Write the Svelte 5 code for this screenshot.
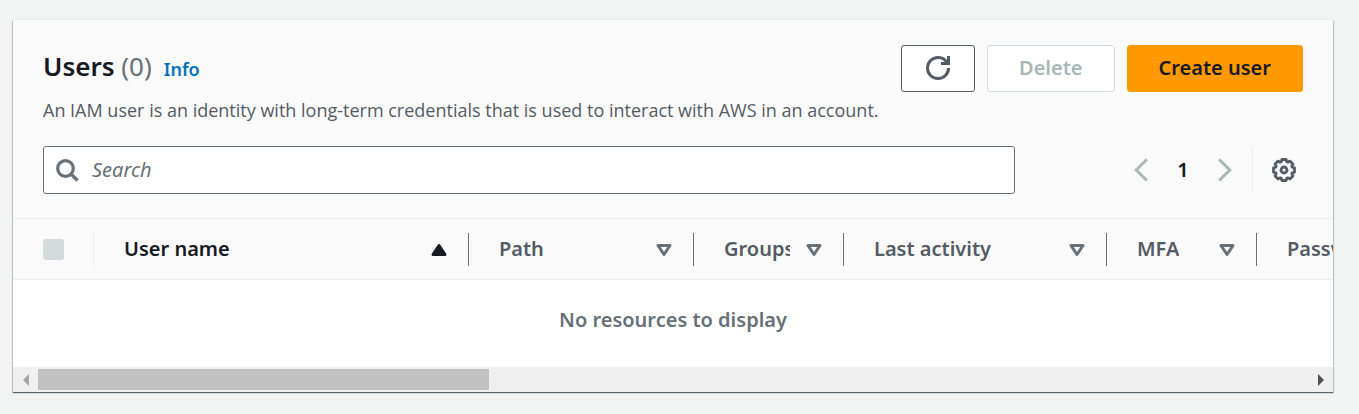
<script>
  let query = $state('');

  const columns = [
    { name: 'User name', width: 375, sorted: true },
    { name: 'Path', width: 225 },
    { name: 'Groups', width: 150 },
    { name: 'Last activity', width: 263 },
    { name: 'MFA', width: 150 },
    { name: 'Password age', width: 263 }
  ];
</script>

<main>
  <section class="card" aria-labelledby="title">
    <header>
      <div class="top">
        <div class="heading">
          <div class="title-row">
            <h1 id="title">Users <span class="count">(0)</span></h1>
            <a href="#info">Info</a>
          </div>
          <p>An IAM user is an identity with long-term credentials that is used to interact with AWS in an account.</p>
        </div>
        <div class="actions">
          <button class="btn refresh" type="button" aria-label="Refresh">
            <svg width="24" height="24" viewBox="0 0 16 16" fill="none" stroke="currentColor" stroke-width="2" aria-hidden="true">
              <path d="M10 5h5V0" />
              <path d="M15 8a6.957 6.957 0 0 1-7 7 6.957 6.957 0 0 1-7-7 6.957 6.957 0 0 1 7-7 6.87 6.87 0 0 1 6.3 4" />
            </svg>
          </button>
          <button class="btn" type="button" disabled>Delete</button>
          <button class="btn primary" type="button">Create user</button>
        </div>
      </div>
      <div class="tools">
        <label class="search">
          <svg width="24" height="24" viewBox="0 0 24 24" fill="none" stroke="currentColor" stroke-width="3.2" aria-hidden="true">
            <circle cx="10.5" cy="10.5" r="7.8" />
            <path d="M16 16l6.5 6.5" />
          </svg>
          <input type="text" placeholder="Search" aria-label="Search" bind:value={query} />
        </label>
        <div class="controls">
          <nav aria-label="Pagination">
            <button class="icon" type="button" disabled aria-label="Previous page">
              <svg width="14" height="24" viewBox="0 0 14 24" fill="none" stroke="currentColor" stroke-width="3" aria-hidden="true"><path d="M12.8 1.5L2.2 12l10.6 10.5" /></svg>
            </button>
            <button class="icon page" type="button" aria-current="page">1</button>
            <button class="icon" type="button" disabled aria-label="Next page">
              <svg width="14" height="24" viewBox="0 0 14 24" fill="none" stroke="currentColor" stroke-width="3" aria-hidden="true"><path d="M1.2 1.5L11.8 12 1.2 22.5" /></svg>
            </button>
          </nav>
          <button class="icon settings" type="button" aria-label="Preferences">
            <svg width="26" height="26" viewBox="0 0 26 26" fill="none" stroke="currentColor" stroke-width="2.8" stroke-linejoin="round" aria-hidden="true">
              <path d="M10.9 2.5h4.2l.7 2.3 1 .4 2.1-1.1 3 3-1.1 2.1.4 1 2.3.7v4.2l-2.3.7-.4 1 1.1 2.1-3 3-2.1-1.1-1 .4-.7 2.3h-4.2l-.7-2.3-1-.4-2.1 1.1-3-3 1.1-2.1-.4-1-2.3-.7v-4.2l2.3-.7.4-1-1.1-2.1 3-3 2.1 1.1 1-.4z" />
              <circle cx="13" cy="13" r="3" />
            </svg>
          </button>
        </div>
      </div>
    </header>

    <div class="scroller">
      <table>
        <colgroup>
          <col style="width: 81px" />
          {#each columns as column}
            <col style="width: {column.width}px" />
          {/each}
        </colgroup>
        <thead>
          <tr>
            <th class="select" scope="col">
              <div class="cell"><input type="checkbox" disabled aria-label="Select all users" /></div>
            </th>
            {#each columns as column}
              <th scope="col" class:sorted={column.sorted} aria-sort={column.sorted ? 'ascending' : 'none'}>
                <div class="cell">
                  <span class="name">{column.name}</span>
                  <svg width="24" height="24" viewBox="0 0 16 16" stroke="currentColor" stroke-width="2" stroke-linejoin="round" aria-hidden="true">
                    {#if column.sorted}
                      <path d="M4 11h8L8 5z" fill="currentColor" />
                    {:else}
                      <path d="M4 5h8l-4 6z" fill="none" />
                    {/if}
                  </svg>
                </div>
              </th>
            {/each}
          </tr>
        </thead>
      </table>
    </div>
    <div class="empty" role="status">No resources to display</div>

    <div class="scrollbar">
      <button type="button" disabled aria-label="Scroll left">
        <svg width="6" height="12" viewBox="0 0 6 12" aria-hidden="true"><path d="M6 0v12L0 6z" fill="#a3a3a3" /></svg>
      </button>
      <div class="track"><div class="thumb"></div></div>
      <button type="button" aria-label="Scroll right">
        <svg width="6" height="12" viewBox="0 0 6 12" aria-hidden="true"><path d="M0 0v12l6-6z" fill="#505050" /></svg>
      </button>
    </div>
  </section>
</main>

<style>
  :global(body) {
    margin: 0;
    background: #f2f3f3;
  }

  main {
    padding: 20px 26px 22px 13px;
    font-family: 'Noto Sans', 'Open Sans', sans-serif;
    font-size: 20px;
    line-height: 30px;
    color: #16191f;
  }

  * {
    box-sizing: border-box;
  }

  svg {
    display: block;
    flex: none;
  }

  button,
  input {
    font: inherit;
    color: inherit;
    margin: 0;
  }

  .card {
    background: #fff;
    box-shadow:
      0 1px 1px 0 rgba(0, 28, 36, 0.5),
      1px 1px 1px 0 rgba(0, 28, 36, 0.15),
      -1px 1px 1px 0 rgba(0, 28, 36, 0.15),
      0 -1px 0 0 #eaeded;
  }

  header {
    display: flex;
    flex-direction: column;
    gap: 22px;
    padding: 25px 30px 24px;
    background: #fafafa;
    border-bottom: 1px solid #eaeded;
  }

  .top {
    display: flex;
    justify-content: space-between;
    gap: 12px;
  }

  .title-row {
    display: flex;
    align-items: baseline;
    gap: 12px;
    height: 51px;
  }

  h1 {
    margin: 0;
    font-size: 26px;
    line-height: 42px;
    font-weight: 600;
  }

  .count {
    font-weight: 400;
    color: #687078;
  }

  a {
    font-size: 18px;
    line-height: 24px;
    font-weight: 600;
    color: #0073bb;
    text-decoration: none;
  }

  p {
    margin: 0;
    font-family: 'Open Sans', 'Noto Sans', sans-serif;
    font-size: 18px;
    line-height: 28px;
    color: #545b64;
  }

  .actions {
    display: flex;
    align-items: flex-start;
    flex: none;
    gap: 12px;
  }

  .btn {
    display: flex;
    align-items: center;
    justify-content: center;
    height: 47px;
    padding: 0 31px 2px;
    border: 1px solid #545b64;
    border-radius: 3px;
    background: #fff;
    color: #545b64;
    font-weight: 600;
  }

  .btn:disabled {
    border-color: #d5dbdb;
    color: #aab7b8;
  }

  .refresh {
    padding: 0 24px 2px;
  }

  .primary {
    border-color: #ff9900;
    background: #ff9900;
    color: #16191f;
  }

  .tools {
    display: flex;
    justify-content: space-between;
    gap: 24px;
  }

  .search {
    display: flex;
    align-items: center;
    gap: 13px;
    flex: 0 1 972px;
    height: 48px;
    padding: 0 11px;
    border: 1px solid #687078;
    border-radius: 3px;
    background: #fff;
    color: #687078;
  }

  .search input {
    flex: 1;
    min-width: 0;
    padding: 0;
    border: 0;
    outline: 0;
    background: none;
    color: #16191f;
  }

  .search input::placeholder {
    color: #687078;
    font-style: italic;
    opacity: 1;
  }

  .controls,
  nav {
    display: flex;
    align-items: center;
  }

  nav {
    gap: 16px;
    height: 46px;
    padding-right: 20px;
    border-right: 1px solid #eaeded;
  }

  .icon {
    display: flex;
    align-items: center;
    justify-content: center;
    padding: 0;
    border: 0;
    background: none;
    color: #545b64;
  }

  .icon:disabled {
    color: #aab7b8;
  }

  .page {
    width: 38px;
    color: #16191f;
    font-weight: 600;
  }

  .settings {
    padding: 0 6px 0 18px;
  }

  .scroller {
    overflow: hidden;
  }

  table {
    width: 100%;
    table-layout: fixed;
    border-collapse: collapse;
    background: #fafafa;
  }

  th {
    padding: 14px 0 13px;
    border-bottom: 1px solid #eaeded;
    font-weight: 600;
    text-align: left;
    color: #545b64;
  }

  th svg {
    color: #687078;
  }

  .sorted,
  .sorted svg {
    color: #16191f;
  }

  .cell {
    display: flex;
    align-items: center;
    justify-content: space-between;
    gap: 12px;
    height: 33px;
    padding: 0 17px 0 30px;
    border-right: 1px solid #687078;
  }

  .select .cell {
    border-color: #eaeded;
  }

  .name {
    padding-bottom: 2px;
    overflow: hidden;
    white-space: nowrap;
  }

  input[type='checkbox'] {
    appearance: none;
    width: 21px;
    height: 21px;
    border-radius: 3px;
    background: #d5dbdb;
  }

  .empty {
    padding: 25px 30px 32px;
    text-align: center;
    font-weight: 600;
    color: #687078;
  }

  .scrollbar {
    display: flex;
    height: 25px;
    background: #f0f0f0;
  }

  .scrollbar button {
    display: flex;
    align-items: center;
    justify-content: center;
    width: 25px;
    padding: 0;
    border: 0;
    background: none;
  }

  .track {
    flex: 1;
    padding: 2px 0;
  }

  .thumb {
    width: 35.5%;
    height: 21px;
    background: #c1c1c1;
  }
</style>
